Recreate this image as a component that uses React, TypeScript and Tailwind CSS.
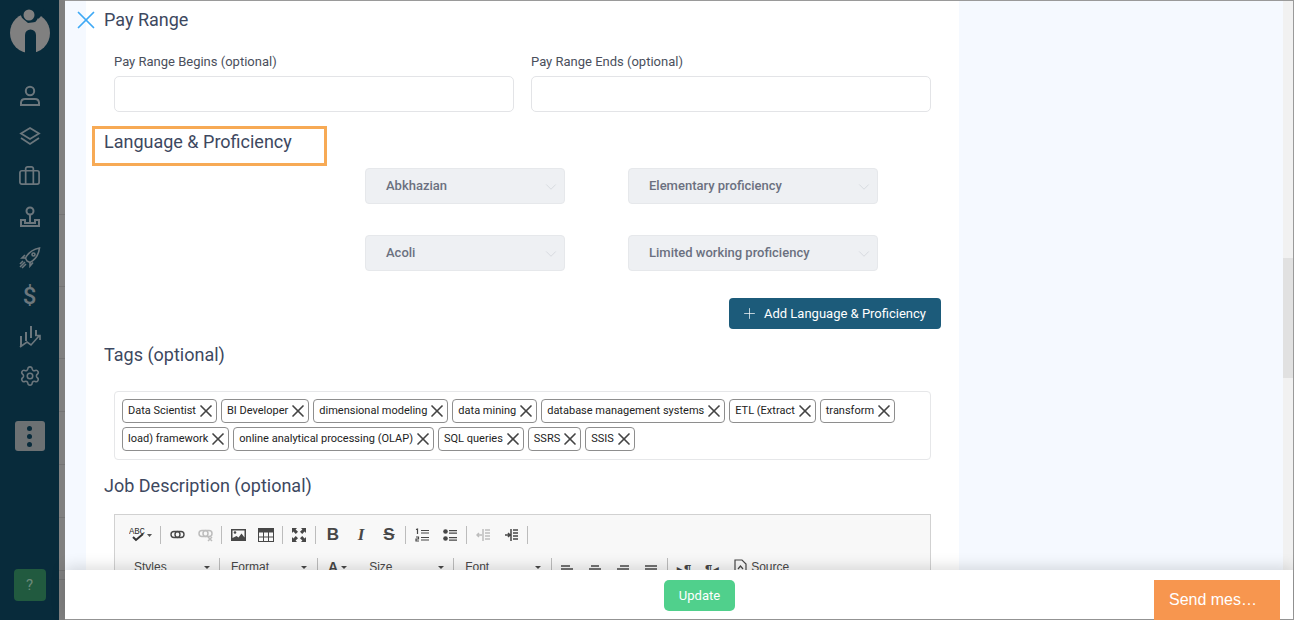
import type { ReactNode } from "react";
import { Briefcase, ChevronDown, Plus, Settings, X } from "lucide-react";

const TAGS = [
  "Data Scientist",
  "BI Developer",
  "dimensional modeling",
  "data mining",
  "database management systems",
  "ETL (Extract",
  "transform",
  "load) framework",
  "online analytical processing (OLAP)",
  "SQL queries",
  "SSRS",
  "SSIS",
];

function NavIcon({ children, className }: { children: ReactNode; className: string }) {
  return <div className={`flex justify-center text-[#6c777d] ${className}`}>{children}</div>;
}

function Sidebar() {
  return (
    <aside className="flex flex-col w-[59px] h-full bg-[#082b3b] shrink-0 items-center">
      <svg width="42" height="46" viewBox="0 0 42 46" className="mt-[8px] ml-[1px] shrink-0">
        <circle cx="21" cy="25" r="20" fill="#808080" />
        <path d="M9 0h26l-3 8-5 6-8 1-6-5Z" fill="#082b3b" />
        <path d="M13 10a8.500 8.500 0 0 0 16 0l3 4-4 6H14l-3-6Z" fill="#808080" />
        <circle cx="20" cy="7" r="5.500" fill="#808080" />
        <path d="M16 46V27a5.500 5.500 0 0 1 11 0V46Z" fill="#082b3b" />
      </svg>
      <NavIcon className="mt-[31px]">
        <svg width="22" height="22" viewBox="0 0 22 22" fill="none" stroke="currentColor" strokeWidth="2">
          <circle cx="11" cy="6" r="4.200" />
          <path d="M2 20v-2.500a4 4 0 0 1 4-3.500h10a4 4 0 0 1 4 3.500V20Z" />
        </svg>
      </NavIcon>
      <NavIcon className="mt-[18px]">
        <svg width="22" height="22" viewBox="0 0 22 22" fill="none" stroke="currentColor" strokeWidth="1.800">
          <path d="M11 3 20 8.500 11 14 2 8.500Z" />
          <path d="m2 13 9 6 9-6" />
        </svg>
      </NavIcon>
      <NavIcon className="mt-[18px]">
        <Briefcase size={23} strokeWidth={1.8} />
      </NavIcon>
      <NavIcon className="mt-[18px]">
        <svg width="22" height="22" viewBox="0 0 22 22" fill="none" stroke="currentColor" strokeWidth="2">
          <circle cx="11" cy="5" r="3.500" />
          <path d="M11 9v8M2 20v-6h4v3h10v-3h4v6Z" />
        </svg>
      </NavIcon>
      <NavIcon className="mt-[19px]">
        <svg width="22" height="22" viewBox="0 0 22 22" fill="none" stroke="currentColor" strokeWidth="1.600">
          <path d="M8 14 6.500 11C9 6 13 2.500 20.500 1c-.8 7-4 11.500-9.500 14.500Z" />
          <circle cx="14.500" cy="7.500" r="1.500" />
          <path d="M6.500 11H3l3-3M11 15.500V19l3-3.500M1 20l5-5M3 21l4-4M1 17l3-3" />
        </svg>
      </NavIcon>
      <div className="mt-[12px] text-[24px] leading-[30px] font-medium text-[#6c777d] font-['Roboto',sans-serif]">$</div>
      <NavIcon className="mt-[13px]">
        <svg width="22" height="24" viewBox="0 0 22 24" fill="none" stroke="currentColor" strokeWidth="2">
          <path d="M2 12v10M7 8v9M12 2v12M17 6v5" />
          <path d="M1 23l7-5 4 3 8-9M16 11.500h5v4.500" strokeWidth="1.600" />
        </svg>
      </NavIcon>
      <NavIcon className="mt-[17px]">
        <Settings size={22} strokeWidth={1.7} />
      </NavIcon>
      <div className="mt-[34px] w-[30px] h-[30px] rounded-[3px] bg-[#6c7173] flex flex-col items-center justify-center gap-[3px]">
        <span className="w-[5px] h-[5px] rounded-full bg-[#082b3b]" />
        <span className="w-[5px] h-[5px] rounded-full bg-[#082b3b]" />
        <span className="w-[5px] h-[5px] rounded-full bg-[#082b3b]" />
      </div>
      <div className="mt-auto mb-[19px] w-[32px] h-[32px] rounded-[4px] bg-[#215a3f] flex items-center justify-center text-[#6d8a7b] text-[15px] font-['Roboto',sans-serif]">
        ?
      </div>
    </aside>
  );
}

function GrayStrip() {
  return (
    <div className="w-[6px] h-full bg-[#808080] shrink-0 flex flex-col">
      <div className="h-[215px] border-b border-[#747474]" />
      <div className="h-[72px] border-b border-[#747474]" />
      <div className="h-[72px] border-b border-[#747474]" />
      <div className="h-[53px] border-b border-[#747474]" />
      <div className="h-[53px] border-b border-[#747474]" />
      <div className="h-[53px] border-b border-[#747474]" />
      <div className="h-[53px] border-b border-[#747474]" />
      <div className="h-[9px] border-b border-[#747474]" />
    </div>
  );
}

function Select({ label, width }: { label: string; width: string }) {
  return (
    <div className={`flex items-center justify-between h-[36px] pl-[20px] pr-[4px] rounded-[4px] bg-[#eef0f3] border border-[#e6e8eb] ${width}`}>
      <span className="text-[13px] font-medium text-[#6b7080]">{label}</span>
      <ChevronDown size={18} className="text-[#cfd3d8] mt-[1px]" strokeWidth={1} />
    </div>
  );
}

function Tool({ children }: { children: ReactNode }) {
  return <div className="w-[28px] flex justify-center items-center h-[20px]">{children}</div>;
}

function Sep({ h = "h-[18px]" }: { h?: string }) {
  return <div className={`w-px ${h} bg-[#bcbcbc] mx-[2px] shrink-0`} />;
}

function Lines({ d, w = 14, color = "#474747" }: { d: string; w?: number; color?: string }) {
  return (
    <svg width={w} height="14" viewBox="0 0 14 14" fill="none" stroke={color} strokeWidth="1.500">
      <path d={d} />
    </svg>
  );
}

function Combo({ label, width }: { label: string; width: string }) {
  return (
    <div className={`flex items-start justify-between ${width}`}>
      <span className="text-[12px] leading-[18px] text-[#484848] font-['Liberation_Sans',sans-serif]">{label}</span>
      <span className="mt-[8px] w-0 h-0 border-x-[3px] border-x-transparent border-t-[3px] border-t-[#484848]" />
    </div>
  );
}

function Editor() {
  return (
    <div className="ml-[10px] w-[817px] h-[100px] border border-b-0 border-[#d1d1d1] bg-[#f8f8f8] pt-[10px]">
      {/* first toolbar row */}
      <div className="flex items-center">
        <div className="w-[43px] pl-[14px] flex items-center">
          <svg width="24" height="20" viewBox="0 0 24 20">
            <text x="0" y="8.500" fontSize="9" fontFamily="Liberation Mono" textLength="16" fill="#333">ABC</text>
            <path d="M4 12l3 3 7-6" fill="none" stroke="#333" strokeWidth="2" />
            <path d="M18 9h5l-2.500 3Z" fill="#555" />
          </svg>
        </div>
        <Sep />
        <Tool>
          <svg width="15" height="10" viewBox="0 0 15 10" fill="none" stroke="#474747" strokeWidth="1.400">
            <rect x="1" y="1.500" width="9" height="6" rx="3" />
            <rect x="5" y="1.500" width="9" height="6" rx="3" />
          </svg>
        </Tool>
        <Tool>
          <svg width="15" height="13" viewBox="0 0 15 13" fill="none" stroke="#bdbdbd" strokeWidth="1.500">
            <rect x="1" y="1.500" width="9" height="6" rx="3" />
            <rect x="5" y="1.500" width="9" height="6" rx="3" />
            <path d="M10 8l4 4M14 8l-4 4" />
          </svg>
        </Tool>
        <Sep />
        <Tool>
          <svg width="15" height="14" viewBox="0 0 15 14">
            <path d="M0 1h15v12H0Z" fill="#474747" />
            <path d="M1.500 2.500h12v7l-3-4-3 4-2-1.500-4 2Z" fill="#f8f8f8" />
            <circle cx="4" cy="4.500" r="1.300" fill="#474747" />
          </svg>
        </Tool>
        <Tool>
          <svg width="16" height="14" viewBox="0 0 16 14" fill="none" stroke="#474747">
            <rect x=".5" y=".5" width="15" height="13" />
            <path d="M0 2.500h16" strokeWidth="4" />
            <path d="M.5 9h15M5.500 4v10M10.500 4v10" />
          </svg>
        </Tool>
        <Sep />
        <Tool>
          <svg width="14" height="14" viewBox="0 0 14 14" fill="#474747">
            <path d="M0 0h5L3.600 1.400 6 3.800 3.800 6 1.400 3.600 0 5ZM14 0v5l-1.400-1.400L10.200 6 8 3.800l2.400-2.400L9 0ZM0 14V9l1.400 1.400L3.800 8 6 10.200l-2.400 2.400L5 14ZM14 14H9l1.400-1.400L8 10.200 10.200 8l2.400 2.400L14 9Z" />
          </svg>
        </Tool>
        <Sep />
        <div className="w-px" />
        <Tool>
          <span className="text-[17px] font-bold text-[#474747] font-['Liberation_Sans',sans-serif]">B</span>
        </Tool>
        <Tool>
          <span className="text-[17px] font-bold italic text-[#474747] font-['Liberation_Serif',serif]">I</span>
        </Tool>
        <Tool>
          <span className="text-[17px] font-bold line-through text-[#474747] font-['Liberation_Sans',sans-serif]">S</span>
        </Tool>
        <Sep />
        <Tool>
          <svg width="14" height="14" viewBox="0 0 14 14" fill="none" stroke="#474747" strokeWidth="1.200">
            <path d="M1 1.500 2.500 1v5M6 2.500h8M6 5h8M1 9h2.500v2H1v2h3M6 9.500h8M6 12h8" />
          </svg>
        </Tool>
        <Tool>
          <svg width="14" height="14" viewBox="0 0 14 14" fill="#474747">
            <circle cx="2.500" cy="3.500" r="2.300" />
            <circle cx="2.500" cy="10.500" r="2.300" />
            <path d="M6 2h8v1.300H6ZM6 4.500h8v1.300H6ZM6 9h8v1.300H6ZM6 11.500h8v1.300H6Z" />
          </svg>
        </Tool>
        <Sep />
        <Tool>
          <Lines color="#bdbdbd" w={14} d="M7 1v12M9 2h5M9 5h5M9 8h5M9 11h5M1 7h5M3 5 1 7l2 2" />
        </Tool>
        <Tool>
          <Lines w={14} d="M7 1v12M9 2h5M9 5h5M9 8h5M9 11h5M1 7h5M4 5l2 2-2 2" />
        </Tool>
        <Sep />
      </div>
      {/* second toolbar row */}
      <div className="flex items-start mt-[13px] h-[18px]">
        <div className="w-[12px]" />
        <Combo label="Styles" width="w-[83px] pl-[7px]" />
        <div className="w-[7px]" />
        <Sep />
        <div className="w-[6px]" />
        <Combo label="Format" width="w-[77px] pl-[1px] ml-[2px]" />
        <div className="w-[8px]" />
        <Sep />
        <div className="w-[8px]" />
        <span className="text-[14px] leading-[18px] font-bold text-[#474747] font-['Liberation_Sans',sans-serif]">A</span>
        <span className="mt-[8px] ml-[3px] w-0 h-0 border-x-[3px] border-x-transparent border-t-[3px] border-t-[#484848]" />
        <div className="w-[22px]" />
        <Combo label="Size" width="w-[75px]" />
        <div className="w-[7px]" />
        <Sep />
        <div className="w-[9px]" />
        <Combo label="Font" width="w-[76px]" />
        <div className="w-[8px]" />
        <Sep />
        <div className="flex items-start pt-[3px] ml-[-1px]">
          <Tool><Lines d="M1 2h9M1 5h12M1 8h9M1 11h12" /></Tool>
          <Tool><Lines d="M3 2h8M1 5h12M3 8h8M1 11h12" /></Tool>
          <Tool><Lines d="M4 2h9M1 5h12M4 8h9M1 11h12" /></Tool>
          <Tool><Lines d="M1 2h12M1 5h12M1 8h12M1 11h12" /></Tool>
        </div>
        <Sep />
        <div className="flex items-start pt-[2px]">
          <Tool>
            <span className="text-[13px] leading-[14px] font-bold text-[#474747] font-['Liberation_Sans',sans-serif]">▸¶</span>
          </Tool>
          <Tool>
            <span className="text-[13px] leading-[14px] font-bold text-[#474747] font-['Liberation_Sans',sans-serif]">¶◂</span>
          </Tool>
        </div>
        <svg width="13" height="15" viewBox="0 0 13 15" fill="none" stroke="#474747" strokeWidth="1.200" className="ml-[8px] mt-[1px] shrink-0">
          <path d="M1 1h7l4 4v9H1Z" />
          <path d="m4 10 2.500-3L9 10" />
        </svg>
        <span className="ml-[4px] text-[12px] leading-[18px] text-[#484848] font-['Liberation_Sans',sans-serif]">Source</span>
      </div>
    </div>
  );
}

function Heading({ children }: { children: ReactNode }) {
  return <h2 className="text-[18px] leading-[24px] text-[#3d4860]">{children}</h2>;
}

function FormPanel() {
  return (
    <div className="w-[873px] h-full bg-white shrink-0 pl-[18px]">
      <div className="relative pt-[7px]">
        <X size={30} strokeWidth={1.4} className="absolute left-[-33px] top-[4px] text-[#3ea9f5]" />
        <Heading>Pay Range</Heading>
      </div>
      <div className="ml-[10px] mt-[22px] grid grid-cols-[400px_400px] gap-x-[17px]">
        <div>
          <label className="block text-[13px] leading-[16px] text-[#4a4f5c]">Pay Range Begins (optional)</label>
          <div className="mt-[6px] h-[36px] rounded-[5px] border border-[#e3e4e7]" />
        </div>
        <div>
          <label className="block text-[13px] leading-[16px] text-[#4a4f5c]">Pay Range Ends (optional)</label>
          <div className="mt-[6px] h-[36px] rounded-[5px] border border-[#e3e4e7]" />
        </div>
      </div>

      <div className="relative mt-[18px]">
        <Heading>Language &amp; Proficiency</Heading>
        <div className="absolute left-[-12px] top-[-4px] w-[235px] h-[40px] border-[3px] border-[#f7aa55]" />
      </div>

      <div className="ml-[261px] mt-[14px] flex flex-col gap-y-[31px]">
        <div className="flex gap-x-[63px]">
          <Select label="Abkhazian" width="w-[200px]" />
          <Select label="Elementary proficiency" width="w-[250px]" />
        </div>
        <div className="flex gap-x-[63px]">
          <Select label="Acoli" width="w-[200px]" />
          <Select label="Limited working proficiency" width="w-[250px]" />
        </div>
      </div>

      <div className="flex justify-end w-[837px] mt-[27px]">
        <button className="flex items-center h-[31px] w-[212px] pl-[12px] rounded-[4px] bg-[#1c5b7a] text-white text-[13px]">
          <Plus size={17} strokeWidth={1} className="mr-[6px]" />
          Add Language &amp; Proficiency
        </button>
      </div>

      <div className="mt-[14px]">
        <Heading>Tags (optional)</Heading>
      </div>
      <div className="ml-[10px] mt-[24px] w-[817px] h-[69px] rounded-[4px] border border-[#e6e7e9] pl-[7px] pr-[7px] pt-[7px] flex flex-wrap content-start gap-x-[4px] gap-y-[4px]">
        {TAGS.map((tag) => (
          <span key={tag} className="flex items-center h-[24px] pl-[5px] rounded-[4px] border border-[#8e8e8e] text-[11px] text-[#222] bg-white">
            {tag}
            <X size={20} strokeWidth={2} className="text-[#444]" />
          </span>
        ))}
      </div>

      <div className="mt-[14px] mb-[16px]">
        <Heading>Job Description (optional)</Heading>
      </div>
      <Editor />
    </div>
  );
}

export default function App() {
  return (
    <div className="flex w-[1294px] h-[620px] overflow-hidden font-['Roboto',sans-serif] bg-white">
      <Sidebar />
      <GrayStrip />
      <main className="flex flex-col flex-1 min-w-0 border-t border-r border-b border-[#9a9a9a]">
        <div className="flex h-[569px] bg-[#f5f9ff] shrink-0 overflow-hidden">
          <div className="w-[21px] shrink-0" />
          <FormPanel />
          <div className="flex-1" />
          <div className="w-[10px] bg-[#f1f1f1] shrink-0 pt-[257px]">
            <div className="h-[120px] bg-[#e1e1e1]" />
          </div>
        </div>
        <div className="relative flex-1 bg-white shadow-[0_-3px_14px_rgba(0,0,0,0.14)] flex justify-center">
          <button className="absolute left-[599px] top-[10px] w-[71px] h-[31px] rounded-[5px] bg-[#50d08c] text-white text-[13px]">
            Update
          </button>
          <button className="absolute left-[1089px] top-[10px] w-[126px] h-[40px] pr-[8px] bg-[#f7964f] text-white text-[16px] font-['Liberation_Sans',sans-serif]">
            Send mes…
          </button>
        </div>
      </main>
    </div>
  );
}
